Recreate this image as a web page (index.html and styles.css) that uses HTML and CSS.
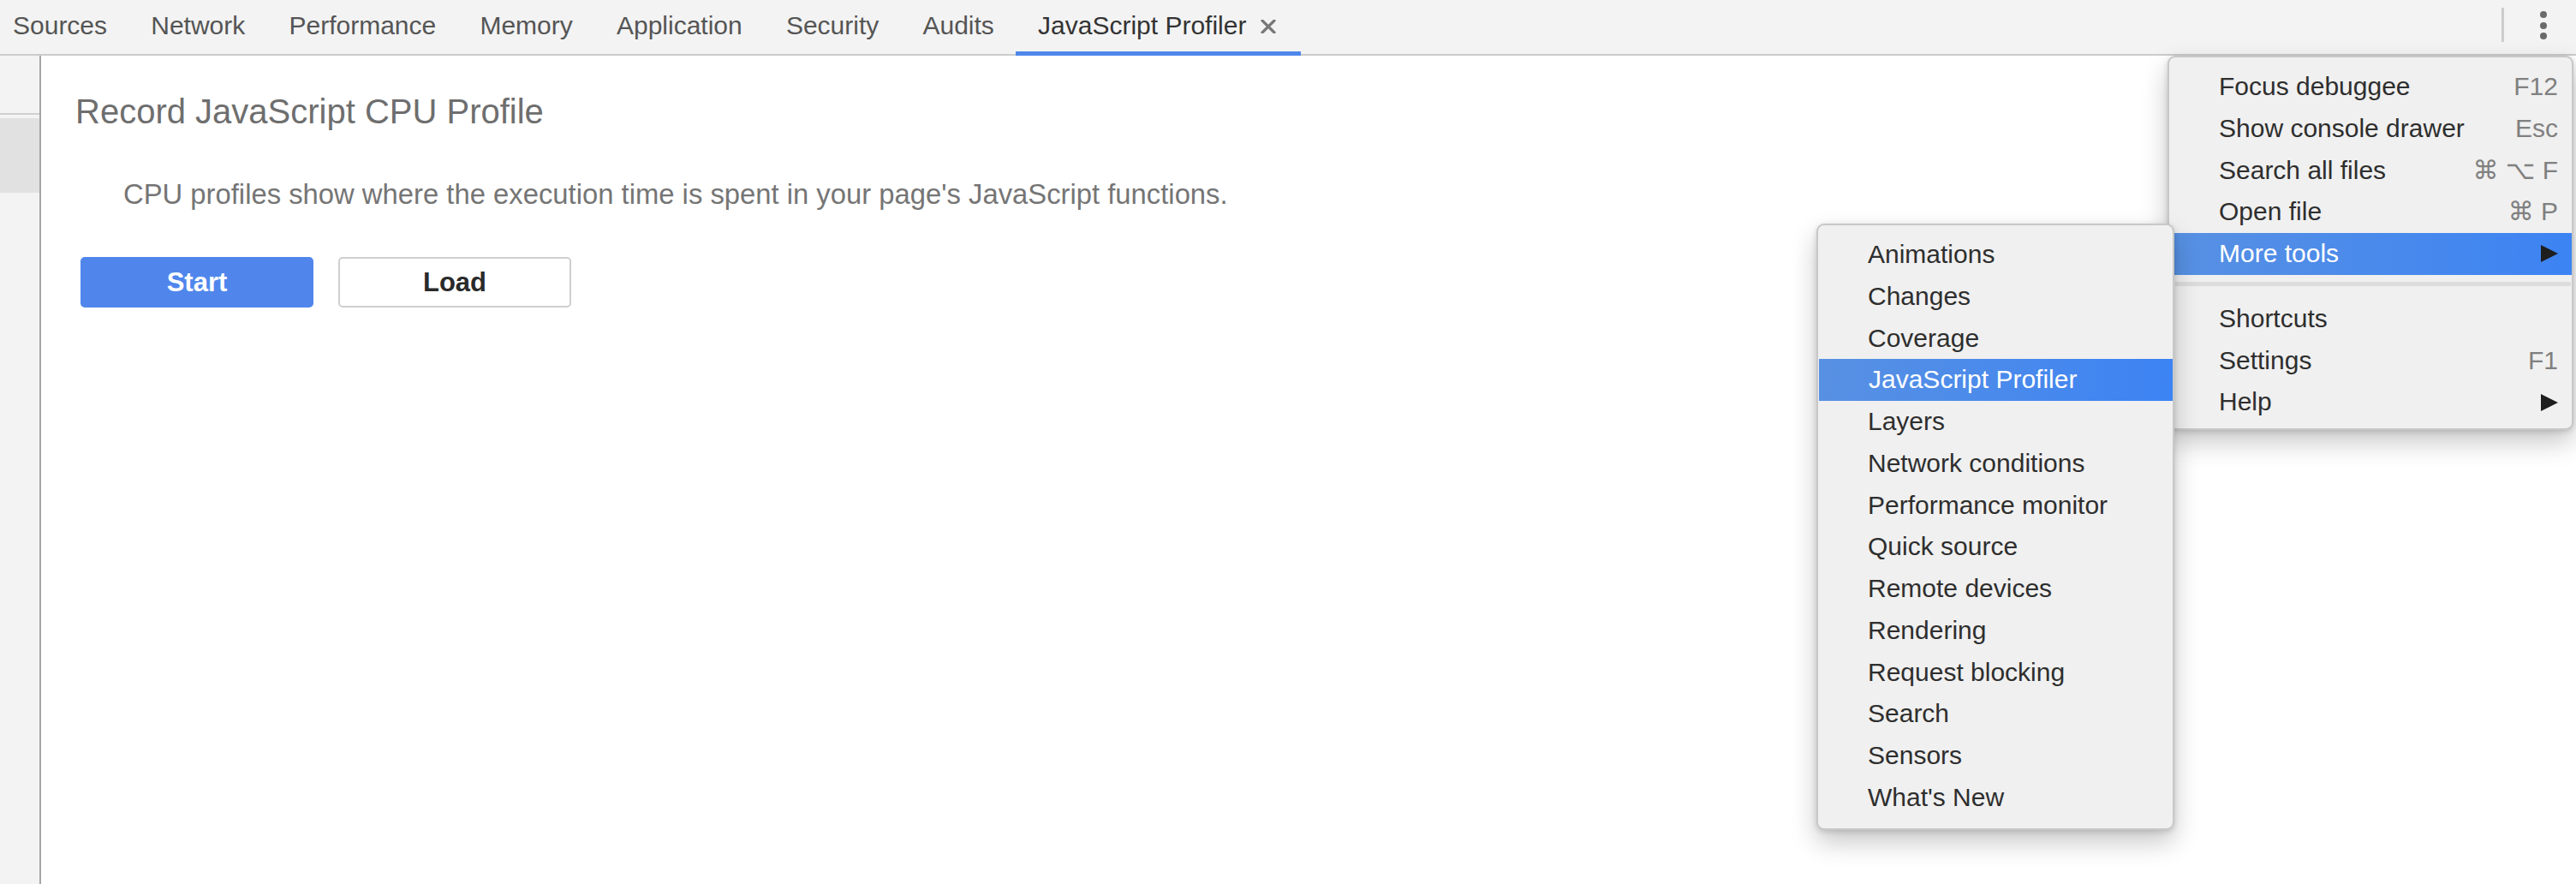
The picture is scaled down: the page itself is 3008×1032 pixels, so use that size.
FILE: index.html
```html
<!DOCTYPE html>
<html>
<head>
<meta charset="utf-8">
<link rel="stylesheet" href="styles.css">
</head>
<body>
<div class="app">
  <header class="tabbar">
    <div class="tab">Sources</div>
    <div class="tab">Network</div>
    <div class="tab">Performance</div>
    <div class="tab">Memory</div>
    <div class="tab">Application</div>
    <div class="tab">Security</div>
    <div class="tab">Audits</div>
    <div class="tab selected">JavaScript Profiler
      <svg class="tab-close" width="18" height="16" viewBox="0 0 18 16"><path d="M2 1 L16 15 M16 1 L2 15" stroke="#777" stroke-width="3.2" stroke-linecap="round"/></svg>
    </div>
    <div class="tabbar-right">
      <span class="tb-sep"></span>
      <span class="kebab"><i></i><i></i><i></i></span>
    </div>
  </header>
  <div class="content">
    <aside class="sidebar">
      <div class="sb-toolbar"></div>
      <div class="sb-item"></div>
    </aside>
    <main class="panel">
      <h1 class="title">Record JavaScript CPU Profile</h1>
      <p class="desc">CPU profiles show where the execution time is spent in your page's JavaScript functions.</p>
      <div class="actions">
        <button class="btn primary">Start</button>
        <button class="btn">Load</button>
      </div>
    </main>
  </div>

  <div class="menu main-menu">
    <div class="item"><span class="label">Focus debuggee</span><span class="key">F12</span></div>
    <div class="item"><span class="label">Show console drawer</span><span class="key">Esc</span></div>
    <div class="item"><span class="label">Search all files</span><span class="key">⌘ ⌥ F</span></div>
    <div class="item"><span class="label">Open file</span><span class="key">⌘ P</span></div>
    <div class="item active"><span class="label">More tools</span><svg class="arrow" width="20" height="20" viewBox="0 0 20 20"><polygon points="0,0 20,10 0,20" fill="#1e1e1e"/></svg></div>
    <div class="separator"></div>
    <div class="item"><span class="label">Shortcuts</span></div>
    <div class="item"><span class="label">Settings</span><span class="key">F1</span></div>
    <div class="item"><span class="label">Help</span><svg class="arrow" width="20" height="20" viewBox="0 0 20 20"><polygon points="0,0 20,10 0,20" fill="#1e1e1e"/></svg></div>
  </div>

  <div class="menu sub-menu">
    <div class="item"><span class="label">Animations</span></div>
    <div class="item"><span class="label">Changes</span></div>
    <div class="item"><span class="label">Coverage</span></div>
    <div class="item active"><span class="label">JavaScript Profiler</span></div>
    <div class="item"><span class="label">Layers</span></div>
    <div class="item"><span class="label">Network conditions</span></div>
    <div class="item"><span class="label">Performance monitor</span></div>
    <div class="item"><span class="label">Quick source</span></div>
    <div class="item"><span class="label">Remote devices</span></div>
    <div class="item"><span class="label">Rendering</span></div>
    <div class="item"><span class="label">Request blocking</span></div>
    <div class="item"><span class="label">Search</span></div>
    <div class="item"><span class="label">Sensors</span></div>
    <div class="item"><span class="label">What's New</span></div>
  </div>
</div>
</body>
</html>
```

FILE: styles.css
```css
* { box-sizing: border-box; }
html, body {
  margin: 0;
  padding: 0;
  width: 3008px;
  height: 1032px;
  overflow: hidden;
  background: #ffffff;
  font-family: "Liberation Sans", Arial, "DejaVu Sans", sans-serif;
}
.app {
  position: relative;
  width: 3008px;
  height: 1032px;
  display: flex;
  flex-direction: column;
}

/* Tab bar */
.tabbar {
  height: 65px;
  flex: 0 0 65px;
  display: flex;
  align-items: stretch;
  background: #f3f3f3;
  border-bottom: 2px solid #cccccc;
}
.tab {
  position: relative;
  display: flex;
  align-items: center;
  padding: 0 25.6px 3px 25.6px;
  font-size: 30px;
  color: #555555;
  white-space: nowrap;
}
.tab:first-child { padding-left: 15px; }
.tab.selected {
  color: #333333;
  padding-right: 29px;
}
.tab.selected::after {
  content: "";
  position: absolute;
  left: 0;
  right: 0;
  bottom: -2px;
  height: 5px;
  background: #4f87eb;
}
.tab-close {
  margin-left: 17px;
  margin-top: 2px;
}
.tabbar-right {
  margin-left: auto;
  display: flex;
  align-items: center;
  padding-right: 23px;
}
.tb-sep {
  width: 3px;
  height: 40px;
  background: #cccccc;
  margin-right: 31px;
  margin-bottom: 6px;
}
.kebab {
  width: 30px;
  display: flex;
  flex-direction: column;
  align-items: center;
  gap: 4.5px;
  margin-bottom: 4px;
}
.kebab i {
  display: block;
  width: 8px;
  height: 8px;
  border-radius: 50%;
  background: #6a6a6a;
}

/* Content */
.content {
  flex: 1;
  display: flex;
  min-height: 0;
}
.sidebar {
  width: 48px;
  flex: 0 0 48px;
  background: #f3f3f3;
  border-right: 2px solid #a6a6a6;
}
.sb-toolbar {
  height: 69px;
  border-bottom: 2px solid #d0d0d0;
}
.sb-item {
  margin-top: 4px;
  height: 87px;
  background: #e1e1e1;
}
.panel {
  flex: 1;
  padding: 41px 40px 0 40px;
}
.title {
  margin: 0;
  font-size: 40px;
  line-height: 48px;
  font-weight: normal;
  color: #6e6e6e;
}
.desc {
  margin: 53px 0 0 56px;
  font-size: 32.8px;
  line-height: 39px;
  color: #757575;
}
.actions {
  margin-top: 54px;
  margin-left: 6px;
  display: flex;
  gap: 29px;
}
.btn {
  width: 272px;
  height: 59px;
  border-radius: 5px;
  border: 2px solid #cfcfcf;
  background: #ffffff;
  font-family: "Liberation Sans", Arial, sans-serif;
  font-size: 31px;
  font-weight: bold;
  color: #2a2a2a;
  padding: 0;
}
.btn.primary {
  background: #5086ec;
  border-color: #5086ec;
  color: #ffffff;
}

/* Menus */
.menu {
  position: absolute;
  background: #f0f0f0;
  border: 2px solid #c8c8c8;
  border-radius: 9px;
  box-shadow: 0 14px 30px rgba(0, 0, 0, 0.22), 0 2px 6px rgba(0, 0, 0, 0.15);
  font-size: 30px;
  color: #2e2e2e;
}
.main-menu {
  left: 2531px;
  top: 65px;
  width: 474px;
  padding: 10px 0 6px 0;
}
.sub-menu {
  left: 2121px;
  top: 261px;
  width: 418px;
  padding: 10px 0 11px 0;
}
.item {
  height: 48.75px;
  line-height: 48.75px;
  display: flex;
  align-items: center;
  padding: 0 18px 0 58px;
  white-space: nowrap;
}
.main-menu .item { padding-right: 16px; }
.item .label { flex: 1; }
.item .key {
  color: #808080;
}
.item.active {
  background: linear-gradient(to right, #5891e3, #3c83f3);
  color: #ffffff;
}
.sub-menu .item.active { margin: 0 0 0 1px; }
.arrow { display: block; }
.separator {
  height: 5px;
  background: #dcdcdc;
  margin: 8px 1px 14px 7px;
}
```
